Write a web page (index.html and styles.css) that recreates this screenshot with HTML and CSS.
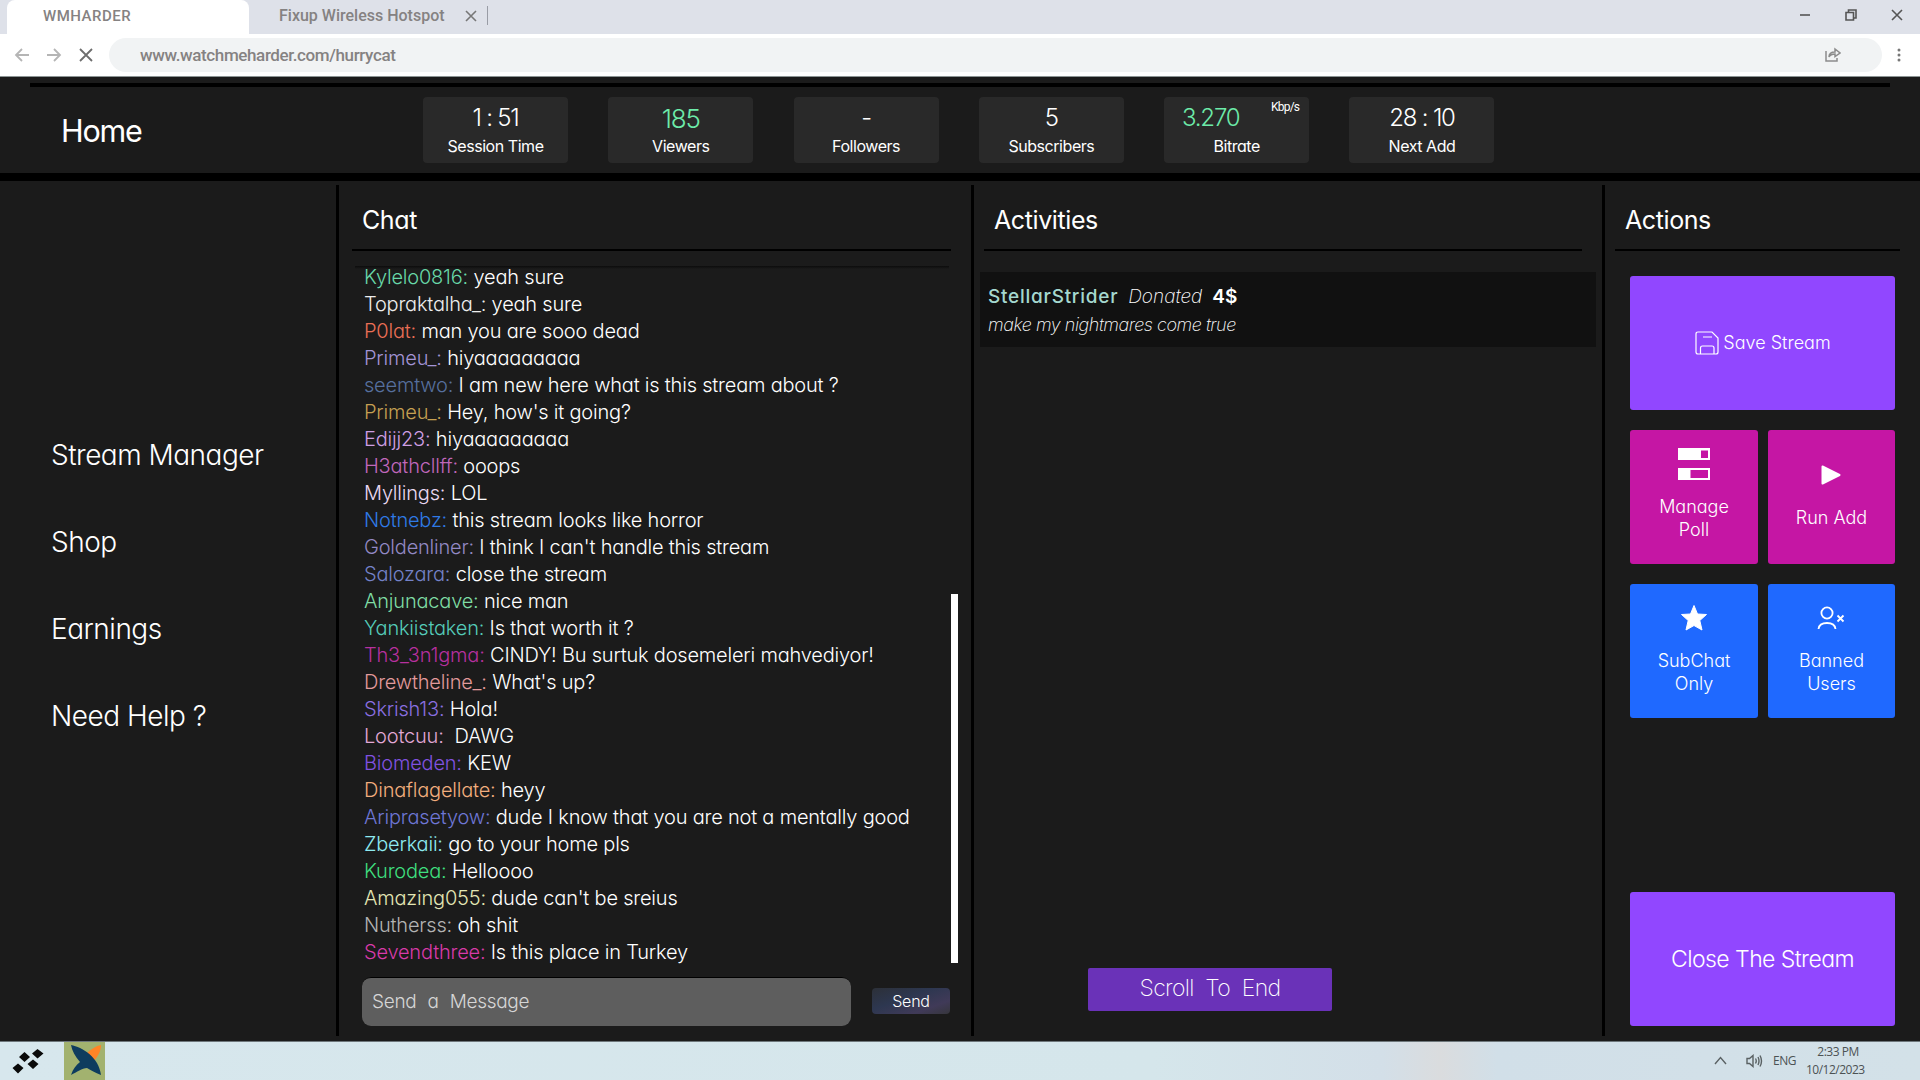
FILE: index.html
```html
<!DOCTYPE html>
<html lang="en">
<head>
    <meta charset="UTF-8">
    <meta name="viewport" content="width=device-width, initial-scale=1.0">
    <title>WMHARDER</title>
    <link rel="stylesheet" href="styles.css">
</head>
<body>
    <div class="browser">
        <div class="tabs">
            <div class="tab active">WMHARDER</div>
            <div class="tab">
                <span class="tab-title">Fixup Wireless Hotspot</span>
                <svg class="tab-close" viewBox="0 0 12 12"><path d="M1 1L11 11M11 1L1 11"/></svg>
            </div>
            <div class="window-btns">
                <svg width="12" height="14" viewBox="0 0 12 14"><path d="M1 7H11"/></svg>
                <svg width="14" height="14" viewBox="0 0 14 14"><path d="M2 4.5H9.500V12H2zM4.500 4V2H12V10H10"/></svg>
                <svg width="12" height="14" viewBox="0 0 12 14"><path d="M1 2L11 12M11 2L1 12"/></svg>
            </div>
        </div>
        <div class="toolbar">
            <svg class="nav-btn" viewBox="0 0 16 16"><path d="M15 8H2M8 2L2 8L8 14"/></svg>
            <svg class="nav-btn" viewBox="0 0 16 16"><path d="M1 8H14M8 2L14 8L8 14"/></svg>
            <svg class="nav-btn stop" viewBox="0 0 16 16"><path d="M2 2L14 14M14 2L2 14"/></svg>
            <div class="address">
                <span class="url">www.watchmeharder.com/hurrycat</span>
                <svg class="share" viewBox="0 0 16 16"><path d="M1 4V14H12V11M4 10C4 6 7 5 10 5V2L15 6L10 9.500V7C7 7 5 8 4 10z"/></svg>
            </div>
            <svg class="more" viewBox="0 0 4 14"><circle cx="2" cy="2" r="1.500"/><circle cx="2" cy="7" r="1.500"/><circle cx="2" cy="12" r="1.500"/></svg>
        </div>
    </div>

    <header class="header">
        <h1 class="home">Home</h1>
        <div class="stats">
            <div class="stat"><p class="value">1 : 51</p><p class="label">Session Time</p></div>
            <div class="stat"><p class="value up viewers">185</p><p class="label">Viewers</p></div>
            <div class="stat"><p class="value">-</p><p class="label">Followers</p></div>
            <div class="stat"><p class="value">5</p><p class="label">Subscribers</p></div>
            <div class="stat"><p class="value up bitrate">3.270</p><span class="unit">Kbp/s</span><p class="label">Bitrate</p></div>
            <div class="stat"><p class="value">28 : 10</p><p class="label">Next Add</p></div>
        </div>
    </header>

    <main class="main">
        <nav class="sidebar">
            <a class="link">Stream Manager</a>
            <a class="link">Shop</a>
            <a class="link">Earnings</a>
            <a class="link">Need Help ?</a>
        </nav>

        <section class="chat">
            <h2 class="title">Chat</h2>
            <div class="chat-body">
                <ul class="messages">
                    <li><span class="mint">Kylelo0816:</span> yeah sure</li>
                    <li><span class="white">Topraktalha_:</span> yeah sure</li>
                    <li><span class="red">P0lat:</span> man you are sooo dead</li>
                    <li><span class="lavender">Primeu_:</span> hiyaaaaaaaaa</li>
                    <li><span class="steel">seemtwo:</span> I am new here what is this stream about ?</li>
                    <li><span class="gold">Primeu_:</span> Hey, how's it going?</li>
                    <li><span class="lilac">Edijj23:</span> hiyaaaaaaaaa</li>
                    <li><span class="orchid">H3athcllff:</span> ooops</li>
                    <li><span class="pale">Myllings:</span> LOL</li>
                    <li><span class="blue">Notnebz:</span> this stream looks like horror</li>
                    <li><span class="dusk">Goldenliner:</span> I think I can't handle this stream</li>
                    <li><span class="slate">Salozara:</span> close the stream</li>
                    <li><span class="leaf">Anjunacave:</span> nice man</li>
                    <li><span class="teal">Yankiistaken:</span> Is that worth it ?</li>
                    <li><span class="magenta">Th3_3n1gma:</span> CINDY! Bu surtuk dosemeleri mahvediyor!</li>
                    <li><span class="salmon">Drewtheline_:</span> What's up?</li>
                    <li><span class="violet">Skrish13:</span> Hola!</li>
                    <li><span class="pink">Lootcuu:</span> &nbsp;DAWG</li>
                    <li><span class="purple">Biomeden:</span> KEW</li>
                    <li><span class="peach">Dinaflagellate:</span> heyy</li>
                    <li><span class="indigo">Ariprasetyow:</span> dude I know that you are not a mentally good</li>
                    <li><span class="cyan">Zberkaii:</span> go to your home pls</li>
                    <li><span class="green">Kurodea:</span> Helloooo</li>
                    <li><span class="cream">Amazing055:</span> dude can't be sreius</li>
                    <li><span class="grey">Nutherss:</span> oh shit</li>
                    <li><span class="hotpink">Sevendthree:</span> Is this place in Turkey</li>
                </ul>
                <div class="scrollbar"></div>
            </div>
            <div class="send-row">
                <div class="input">Send a Message</div>
                <button class="send-btn">Send</button>
            </div>
        </section>

        <section class="activities">
            <h2 class="title">Activities</h2>
            <div class="activity">
                <p class="donation"><span class="donor">StellarStrider</span><span class="verb">Donated</span><span class="amount">4$</span></p>
                <p class="note">make my nightmares come true</p>
            </div>
            <button class="scroll-btn">Scroll To End</button>
        </section>

        <section class="actions">
            <h2 class="title">Actions</h2>
            <div class="action-grid">
                <button class="action wide purple-bg">
                    <svg class="save-icon" viewBox="0 0 24 24"><path d="M3 1H17L23 7V21Q23 23 21 23H3Q1 23 1 21V3Q1 1 3 1zM5.500 23V17Q5.500 15 7.500 15H17Q19 15 19 17V23M8 6H17"/></svg>
                    <span>Save Stream</span>
                </button>
                <button class="action pink-bg">
                    <svg class="poll-icon" viewBox="0 0 32 32"><path fill-rule="evenodd" d="M0 0H32V12H0zM23 2.500V10H30V2.500zM0 20H32V32H0zM12.500 22V30H30V22z"/></svg>
                    <span>Manage<br>Poll</span>
                </button>
                <button class="action pink-bg run">
                    <svg class="play-icon" viewBox="0 0 20 20"><path d="M1.500 1.500L18.500 10L1.500 18.500z"/></svg>
                    <span>Run Add</span>
                </button>
                <button class="action blue-bg">
                    <svg class="star-icon" viewBox="0 0 28 28"><path d="M14 1.500L17.500 10L26.500 10.500L19.800 16.500L22 26L14 21.500L6 26L8.200 16.500L1.500 10.500L10.500 10z"/></svg>
                    <span>SubChat<br>Only</span>
                </button>
                <button class="action blue-bg">
                    <svg class="ban-icon" viewBox="0 0 28 24"><circle cx="10" cy="7" r="5.600"/><path d="M1.500 23C2 18.500 5 17 10 17S18 18.500 18.500 23M20.500 9.500L26.500 15.500M26.500 9.500L20.500 15.500"/></svg>
                    <span>Banned<br>Users</span>
                </button>
            </div>
            <button class="action purple-bg close-btn"><span>Close The Stream</span></button>
        </section>
    </main>

    <footer class="taskbar">
        <svg class="start" viewBox="0 0 32 26"><path d="M6 14.500L11.500 19L6 24.500L0.500 19zM12.500 3L18 8L12.500 13L7 8zM25.500 0L31.500 4.500L25.500 9.500L20 4.500zM21 10.500L26.500 15L21 20L15.500 15z"/></svg>
        <div class="app">
            <svg viewBox="0 0 41 39"><path fill="#ff8427" d="M37 3C32 4 27 7 23 11L30 19C34 14 37 9 37 3z"/><path fill="#0e3c5e" d="M7 3C18 5 35 15 37 33C31 31 27 28 23 26C18 26 13 30 7 33C9 27 12 23 16 20C11 14 8 9 7 3z"/></svg>
        </div>
        <div class="tray">
            <svg class="chevron" viewBox="0 0 13 9"><path d="M1 8L6.500 1.500L12 8"/></svg>
            <svg class="speaker" viewBox="0 0 17 14"><path d="M1 4.500H3.500L7 1.500V12.500L3.500 9.500H1zM9.500 4.500Q11 7 9.500 9.500M12 3Q14 7 12 11M14 1.500Q17 7 14 12.500"/></svg>
            <span class="lang">ENG</span>
            <div class="clock"><p class="time">2:33 PM</p><p>10/12/2023</p></div>
        </div>
    </footer>
</body>
</html>
```

FILE: styles.css
```css
*{
    margin: 0;
    padding: 0;
    box-sizing: border-box;
}
body{
    width: 1920px;
    height: 1080px;
    overflow: hidden;
    display: flex;
    flex-direction: column;
    background-color: #1b1b1b;
    color: white;
    font-family: Inter, "Liberation Sans", sans-serif;
    font-feature-settings: "cv11", "calt" 0;
    font-weight: 300;
}
svg{
    display: block;
    flex: none;
    fill: none;
}
button{
    border: none;
    color: white;
    font: inherit;
    font-feature-settings: inherit;
    cursor: pointer;
}

/* browser bar */
.browser{
    height: 77px;
    flex: none;
    background-color: white;
    border-bottom: 1px solid #8c9494;
    color: #858282;
    font-family: Roboto, sans-serif;
    font-weight: 500;
}
.tabs{
    height: 34px;
    display: flex;
    align-items: center;
    background-color: #dee1e9;
    padding-left: 7px;
}
.tab{
    height: 34px;
    display: flex;
    align-items: center;
    padding: 0 0 3px 30px;
    font-size: 16px;
}
.tab.active{
    width: 242px;
    padding-left: 36px;
    font-size: 15px;
    letter-spacing: 0.500px;
    background-color: white;
    border-radius: 8px 8px 0 0;
}
.tab-close{
    width: 12px;
    height: 12px;
    margin-left: 20px;
    stroke: #777;
    stroke-width: 1.6;
}
.tab::after{
    content: "";
    width: 1px;
    height: 19px;
    margin-left: 10px;
    background-color: #999ca5;
}
.tab.active::after{
    display: none;
}
.window-btns{
    display: flex;
    gap: 33px;
    margin: 0 17px 5px auto;
    stroke: #555;
    stroke-width: 1.6;
}
.toolbar{
    height: 42px;
    display: flex;
    align-items: center;
    padding: 0 19px 0 14px;
}
.nav-btn{
    width: 16px;
    height: 16px;
    margin-right: 16px;
    stroke: #b5b5b5;
    stroke-width: 1.8;
}
.nav-btn.stop{
    margin-right: 15px;
    stroke: #6d6d6d;
}
.address{
    height: 34px;
    flex: 1;
    display: flex;
    align-items: center;
    justify-content: space-between;
    padding: 0 41px 0 31px;
    border-radius: 17px;
    background-color: #f1f3f4;
    font-size: 17px;
    letter-spacing: -0.380px;
}
.share{
    width: 16px;
    height: 16px;
    stroke: #8c8c8c;
    stroke-width: 1.5;
}
.more{
    width: 4px;
    height: 14px;
    margin-left: 15px;
    fill: #777;
}

/* header */
.header{
    height: 104px;
    flex: none;
    display: flex;
    border-bottom: 8px solid black;
    background: linear-gradient(black, black) 30px 6px / 1860px 4px no-repeat;
}
.home{
    width: 362px;
    padding: 35px 0 0 61px;
    font-size: 30.500px;
    line-height: 38px;
    font-weight: 400;
    letter-spacing: -1.200px;
}
.stats{
    display: flex;
    gap: 40.300px;
    padding: 20px 0 0 61px;
}
.stat{
    position: relative;
    width: 145px;
    height: 66px;
    border-radius: 4px;
    background-color: #292929;
    text-align: center;
}
.value{
    padding-top: 6px;
    font-size: 24px;
    line-height: 29px;
    letter-spacing: -1.200px;
}
.up{
    color: #6deba9;
}
.viewers{
    padding-top: 8px;
    font-size: 26px;
    line-height: 27px;
}
.bitrate{
    padding-right: 52px;
}
.unit{
    position: absolute;
    top: 3px;
    right: 10px;
    font-family: Roboto, sans-serif;
    font-size: 12px;
    line-height: 15px;
    font-weight: 400;
    letter-spacing: -0.800px;
}
.label{
    margin-top: 4px;
    font-size: 16px;
    line-height: 20px;
    font-weight: 400;
    letter-spacing: -0.450px;
}

/* columns */
.main{
    height: 860px;
    flex: none;
    display: flex;
    padding: 4px 0 5px;
}
.sidebar{
    width: 336px;
    display: flex;
    flex-direction: column;
    gap: 51px;
    padding: 252px 0 0 51px;
}
.link{
    font-size: 28px;
    line-height: 36px;
    letter-spacing: -0.500px;
}
.title{
    height: 66px;
    flex: none;
    padding: 19px 0 0 10px;
    border-bottom: 2px solid black;
    font-size: 25px;
    line-height: 32px;
    font-weight: 400;
    letter-spacing: -0.400px;
}
.chat{
    width: 635px;
    border-left: 3px solid black;
    padding: 0 20px 0 13px;
}
.chat-body{
    display: flex;
    margin-top: 13px;
    margin-right: -7px;
    height: 702px;
    background: linear-gradient(#0c0c0c, #1b1b1b) 3px 2px / 594px 3px no-repeat;
}
.messages{
    flex: 1;
    list-style: none;
    padding-left: 12px;
    font-size: 20px;
    line-height: 27px;
    letter-spacing: -0.200px;
    white-space: nowrap;
}
.scrollbar{
    width: 7px;
    height: 369px;
    margin-top: 330px;
    background-color: white;
}
.send-row{
    display: flex;
    align-items: center;
    justify-content: space-between;
    margin-top: 11px;
    padding: 0 1px 0 10px;
}
.input{
    width: 489px;
    height: 49px;
    padding: 9px 0 0 10px;
    border-top: 1px solid black;
    border-radius: 9px;
    background-color: #5e5e5e;
    color: #d6d6d6;
    font-size: 19px;
    line-height: 30px;
    letter-spacing: -0.300px;
    word-spacing: 6px;
}
.send-btn{
    width: 78px;
    height: 26px;
    margin-bottom: 2px;
    border-radius: 4px;
    background: linear-gradient(160deg, #2c3038, #2d3750 40%, #403a58 75%, #36363c);
    font-size: 16px;
    letter-spacing: -0.200px;
}
.activities{
    width: 631px;
    display: flex;
    flex-direction: column;
    border-left: 3px solid black;
    padding-left: 6px;
}
.activities .title{
    width: 598px;
    margin-left: 4px;
}
.activity{
    width: 616px;
    height: 75px;
    margin-top: 21px;
    padding: 11px 8px;
    background-color: #111;
}
.donation{
    display: flex;
    font-size: 19px;
    line-height: 28px;
}
.donor{
    color: #a5d8cf;
    font-weight: 500;
    letter-spacing: 0.750px;
}
.verb{
    margin: 0 10px;
    font-style: italic;
    font-weight: 200;
}
.amount{
    font-weight: 600;
}
.note{
    font-size: 18px;
    line-height: 28px;
    font-style: italic;
    font-weight: 200;
    letter-spacing: -0.450px;
}
.scroll-btn{
    width: 244px;
    height: 43px;
    margin: auto 0 25px 108px;
    padding-bottom: 3px;
    border-radius: 2px;
    background-color: #6a32b8;
    font-size: 23px;
    font-weight: 200;
    letter-spacing: -0.700px;
    word-spacing: 6px;
}
.actions{
    flex: 1;
    display: flex;
    flex-direction: column;
    border-left: 3px solid black;
    padding: 0 20px 0 10px;
}
.action-grid{
    display: grid;
    grid-template-columns: 128px 127px;
    grid-auto-rows: 134px;
    gap: 20px 10px;
    margin: 25px 0 0 15px;
}
.action{
    display: flex;
    flex-direction: column;
    align-items: center;
    border-radius: 3px;
    font-size: 18px;
    line-height: 23px;
    padding-top: 18px;
}
.action span{
    margin-top: 15px;
}
.wide{
    grid-column: span 2;
    width: 265px;
    flex-direction: row;
    justify-content: center;
    padding: 0 0 0 1px;
    gap: 4px;
}
.wide span{
    margin: 0 0 1px;
}
.purple-bg{
    background-color: #9147ff;
}
.pink-bg{
    background-color: #c516a4;
}
.blue-bg{
    background-color: #1f69ff;
}
.save-icon{
    width: 24px;
    height: 24px;
    stroke: white;
    stroke-width: 1.2;
}
.poll-icon{
    width: 32px;
    height: 32px;
    fill: white;
}
.run{
    padding-top: 35px;
}
.run span{
    margin-top: 21px;
}
.play-icon{
    width: 20px;
    height: 20px;
    margin-right: 2px;
    fill: white;
    stroke: white;
    stroke-width: 2;
    stroke-linejoin: round;
}
.star-icon{
    width: 28px;
    height: 28px;
    margin: 2px 0;
    fill: white;
    stroke: white;
    stroke-linejoin: round;
}
.ban-icon{
    width: 28px;
    height: 24px;
    margin: 4px 2px 4px 0;
    stroke: white;
    stroke-width: 1.8;
}
.close-btn{
    width: 265px;
    height: 134px;
    margin: auto 0 10px 15px;
    justify-content: center;
    padding: 0;
    font-size: 23px;
    letter-spacing: -0.550px;
}
.close-btn span{
    margin: 0;
}

/* user name colors */
.mint{ color: #68d8a8; }
.white{ color: #ededed; }
.red{ color: #ea6f56; }
.lavender{ color: #a394d6; }
.steel{ color: #566f9d; }
.gold{ color: #c5a052; }
.lilac{ color: #cf9fe4; }
.orchid{ color: #c167bb; }
.pale{ color: #ead9f2; }
.blue{ color: #2f7ae5; }
.dusk{ color: #9389c4; }
.slate{ color: #7482c8; }
.leaf{ color: #7fdda5; }
.teal{ color: #55cbb9; }
.magenta{ color: #b7309f; }
.salmon{ color: #e29a9c; }
.violet{ color: #8a6fe0; }
.pink{ color: #e2a8d6; }
.purple{ color: #8152e0; }
.peach{ color: #f2ae7e; }
.indigo{ color: #6e76d4; }
.cyan{ color: #8eeaf0; }
.green{ color: #3fdf7f; }
.cream{ color: #e3e6b4; }
.grey{ color: #b3b3b3; }
.hotpink{ color: #d83aa9; }

/* taskbar */
.taskbar{
    flex: 1;
    display: flex;
    border-top: 1px solid #6e777b;
    background: linear-gradient(90deg, #d7e7ed, #d5e6eb 60%, #d3dfe8 72%, #dadcde 75%, #d1dfe8 78%, #d3e1e8);
    color: #4c5254;
    font-family: "Open Sans", sans-serif;
    font-weight: 500;
}
.start{
    width: 32px;
    height: 26px;
    margin: 7px 20px 0 12px;
    fill: #0a0a0a;
}
.app{
    width: 41px;
    background-color: #a2b26f;
}
.tray{
    display: flex;
    align-items: center;
    margin-left: auto;
    padding: 0 56px 2px 0;
    font-size: 12px;
    line-height: 18px;
    stroke-width: 1.4;
}
.tray svg{
    stroke: #5a6163;
}
.chevron{
    width: 13px;
    height: 9px;
    margin-right: 19px;
}
.speaker{
    width: 17px;
    height: 14px;
    margin-right: 10px;
}
.lang{
    width: 33px;
    letter-spacing: -0.500px;
}
.clock{
    width: 58px;
    text-align: center;
    letter-spacing: -0.500px;
    white-space: nowrap;
}
.time{
    padding-left: 6px;
}
```
